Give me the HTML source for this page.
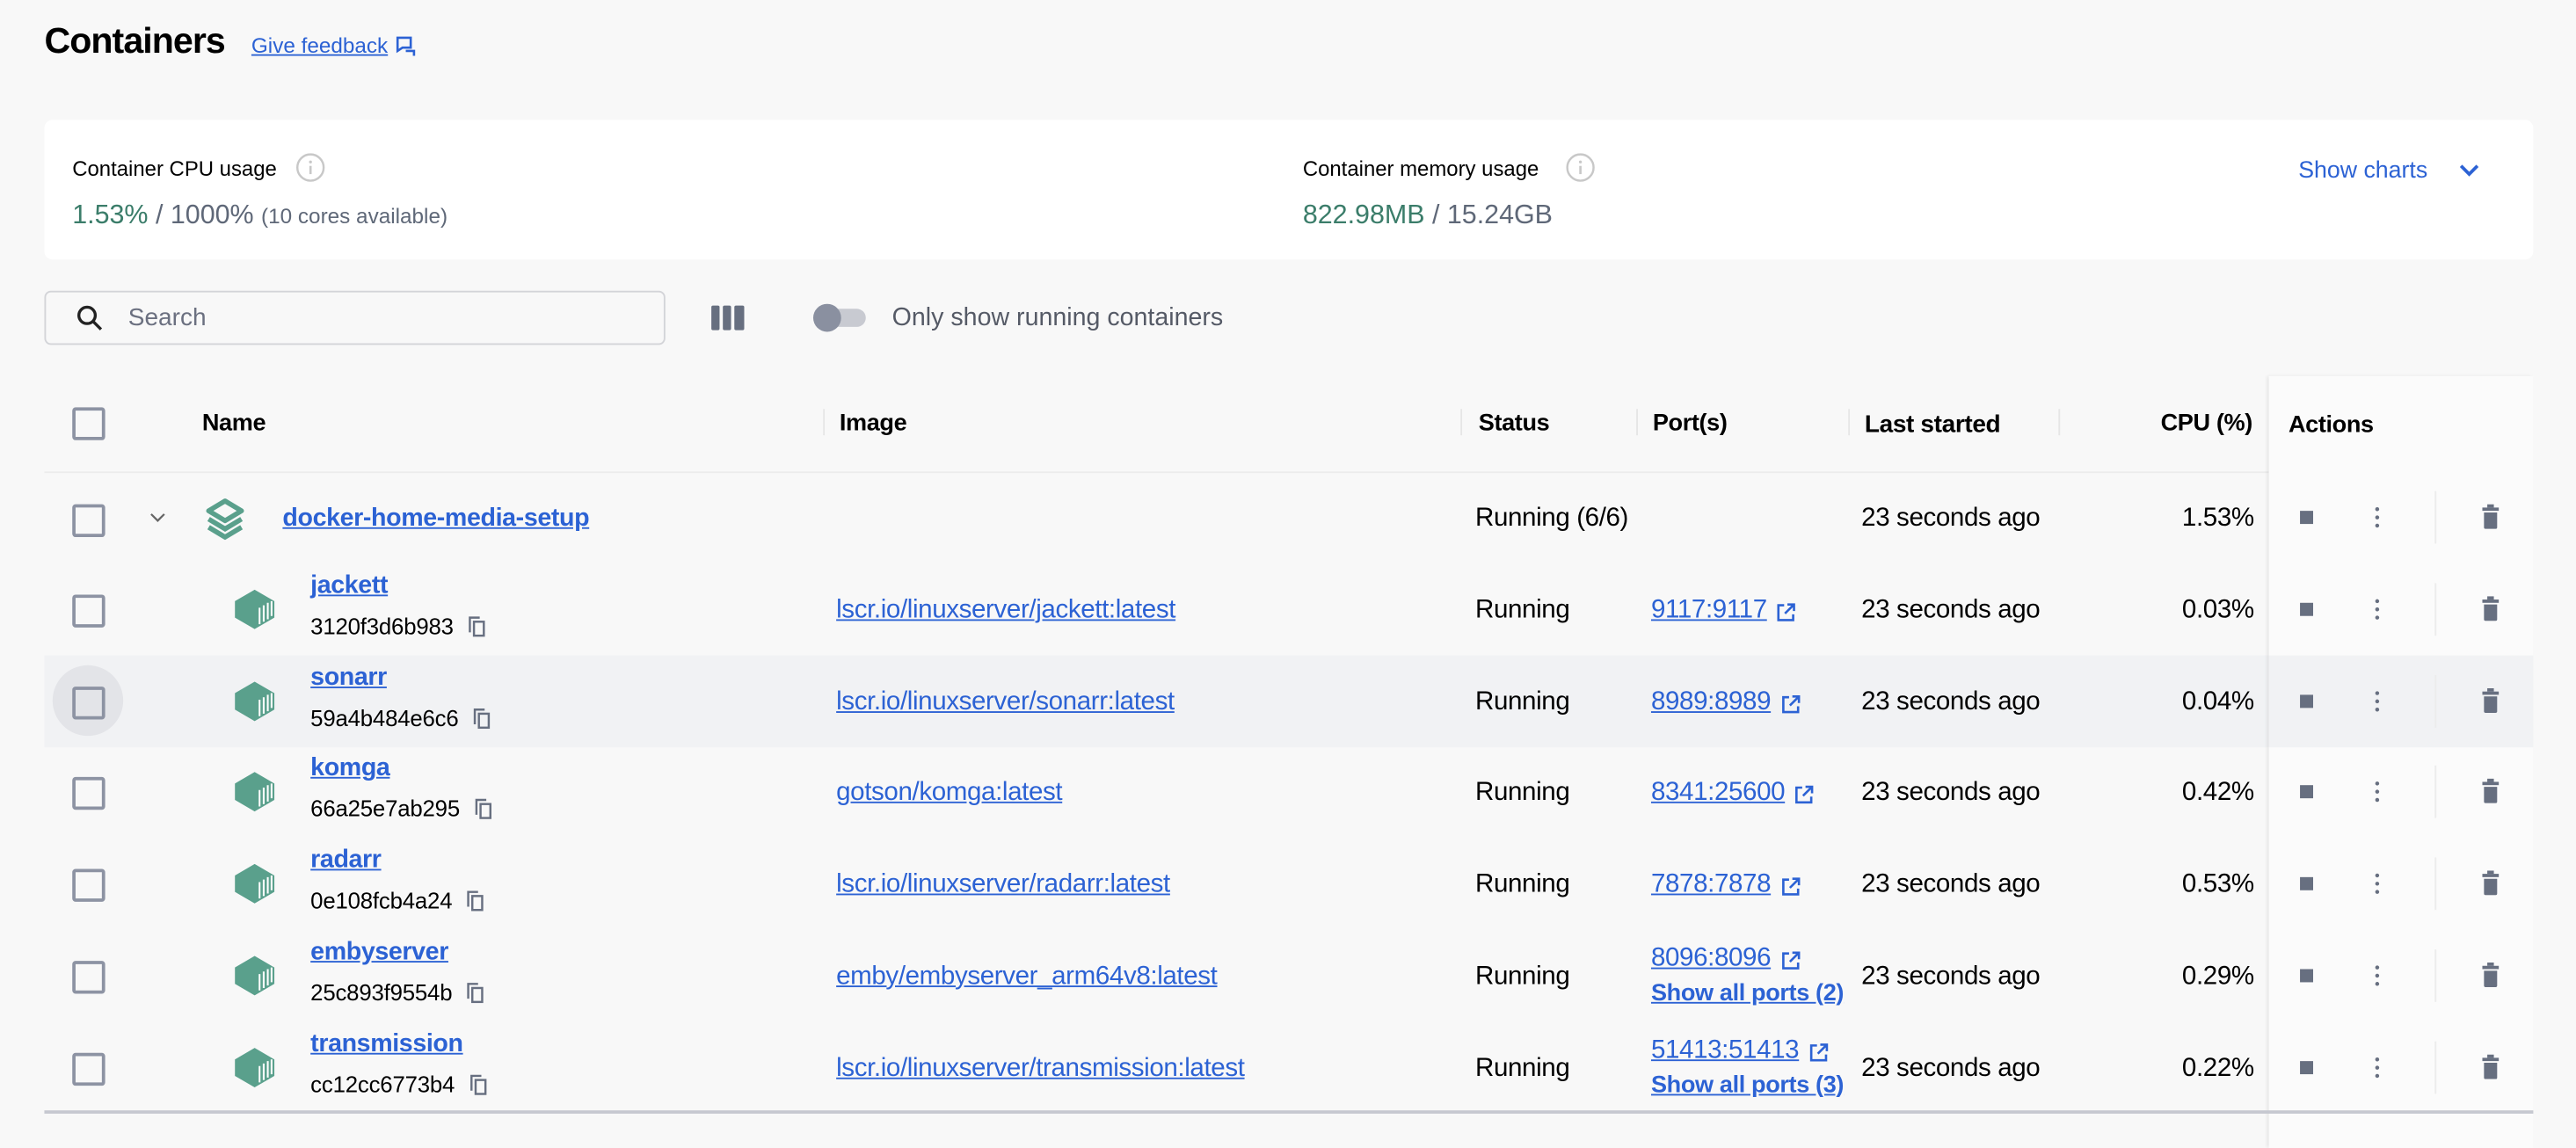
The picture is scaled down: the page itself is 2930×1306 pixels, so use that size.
<!DOCTYPE html>
<html><head><meta charset="utf-8"><style>
html,body{margin:0;padding:0;background:#f8f8f8;overflow:hidden}
#w{position:absolute;left:0;top:0;width:1568px;height:698px;transform:scale(1.86862);transform-origin:0 0;font-family:"Liberation Sans",sans-serif;color:#000;background:#f8f8f8}
.a{position:absolute;white-space:nowrap}
.lnk{color:#2c62d4;text-decoration:underline}
.b{font-weight:bold}
.cb{position:absolute;left:44px;width:16px;height:16px;border:2px solid #8d93a3;border-radius:2px}
.hdr{font-size:14.5px;font-weight:bold;letter-spacing:-0.2px}
.sep{position:absolute;width:1px;height:16px;background:#e6e6e6}
.t{font-size:15.8px;letter-spacing:-0.2px}
.hash{font-size:13.8px;letter-spacing:-0.1px}
</style></head><body><div id="w">
<div class="a" style="left:27px;top:12px;font-size:22px;font-weight:bold;letter-spacing:-0.5px">Containers</div>
<div class="a lnk" style="left:153px;top:20px;font-size:13px">Give feedback</div>
<svg class="a" style="left:241px;top:22px" width="13" height="13" viewBox="0 0 13 13"><path d="M1 1h8v6H4l-3 2z" fill="none" stroke="#2c62d4" stroke-width="1.4"/><path d="M6 9h5v3" fill="none" stroke="#2c62d4" stroke-width="1.4"/></svg>

<div class="a" style="left:27px;top:73px;width:1515px;height:85px;background:#fff;border-radius:5px"></div>
<div class="a" style="left:44px;top:95px;font-size:12.8px">Container CPU usage</div>
<svg class="a" style="left:180px;top:93px" width="18" height="18"><circle cx="9" cy="9" r="8" fill="none" stroke="#c8c8c8" stroke-width="1.3"/><rect x="8.3" y="8" width="1.4" height="5" fill="#c8c8c8"/><circle cx="9" cy="5.6" r="0.9" fill="#c8c8c8"/></svg>
<div class="a" style="left:44px;top:122px;font-size:16.3px;color:#5f6878"><span style="color:#3b7d6a">1.53%</span> / 1000% <span style="font-size:13px">(10 cores available)</span></div>
<div class="a" style="left:793px;top:95px;font-size:12.8px">Container memory usage</div>
<svg class="a" style="left:953px;top:93px" width="18" height="18"><circle cx="9" cy="9" r="8" fill="none" stroke="#c8c8c8" stroke-width="1.3"/><rect x="8.3" y="8" width="1.4" height="5" fill="#c8c8c8"/><circle cx="9" cy="5.6" r="0.9" fill="#c8c8c8"/></svg>
<div class="a" style="left:793px;top:122px;font-size:16.3px;color:#5f6878"><span style="color:#3b7d6a">822.98MB</span> / 15.24GB</div>
<div class="a" style="left:1399px;top:96px;font-size:14.3px;color:#2c62d4">Show charts</div>
<svg class="a" style="left:1496px;top:98px" width="14" height="12"><path d="M2 3l5 5 5-5" fill="none" stroke="#2c62d4" stroke-width="2"/></svg>

<div class="a" style="left:27px;top:177px;width:376px;height:31px;border:1.5px solid #d3d4d8;border-radius:4px;background:#f8f8f8"></div>
<svg class="a" style="left:46px;top:185px" width="18" height="18"><circle cx="7" cy="7" r="5" fill="none" stroke="#222" stroke-width="1.8"/><path d="M10.5 10.5l5 5" stroke="#222" stroke-width="1.8"/></svg>
<div class="a" style="left:78px;top:185px;font-size:15px;color:#6b7080">Search</div>
<div class="a" style="left:433px;top:186px;width:5px;height:15px;background:#676f80;border-radius:1px"></div>
<div class="a" style="left:440px;top:186px;width:5px;height:15px;background:#676f80;border-radius:1px"></div>
<div class="a" style="left:447px;top:186px;width:6px;height:15px;background:#676f80;border-radius:1px"></div>
<div class="a" style="left:498px;top:188px;width:29px;height:11px;background:#c8cad1;border-radius:6px"></div>
<div class="a" style="left:495px;top:185px;width:17px;height:17px;background:#8a90a0;border-radius:50%"></div>
<div class="a" style="left:543px;top:185px;font-size:15.3px;color:#555a66">Only show running containers</div>

<div class="a" style="left:27px;top:287px;width:1515px;height:1px;background:#ececec"></div>
<div class="a" style="left:27px;top:399px;width:1354px;height:56px;background:#f1f2f4"></div>
<div class="a" style="left:1381px;top:229px;width:161px;height:470px;background:#fbfbfb;box-shadow:-1px 0 2px rgba(0,0,0,0.08)"></div>
<div class="a" style="left:1381px;top:399px;width:161px;height:56px;background:#f1f2f4"></div>
<div class="a" style="left:27px;top:676px;width:1515px;height:1.5px;background:#c6c8d0"></div>

<div class="cb" style="top:248px"></div>
<div class="a hdr" style="left:123px;top:250px">Name</div>
<div class="sep" style="left:501px;top:249px"></div><div class="a hdr" style="left:511px;top:250px">Image</div>
<div class="sep" style="left:889px;top:249px"></div><div class="a hdr" style="left:900px;top:250px">Status</div>
<div class="sep" style="left:996px;top:249px"></div><div class="a hdr" style="left:1006px;top:250px">Port(s)</div>
<div class="sep" style="left:1125px;top:249px"></div><div class="a hdr" style="left:1135px;top:250px;font-size:15px">Last started</div>
<div class="sep" style="left:1253px;top:249px"></div><div class="a hdr" style="left:1280px;top:250px;width:91px;text-align:right">CPU (%)</div>
<div class="a hdr" style="left:1393px;top:251px">Actions</div>

<div class="cb" style="top:307px"></div>
<svg class="a" style="left:91px;top:311px" width="10" height="8"><path d="M1 2l4 4 4-4" fill="none" stroke="#666" stroke-width="1.2"/></svg>
<svg class="a" style="left:123px;top:303px" width="28" height="26" viewBox="0 0 28 26"><path d="M14 2l10 6-10 6-10-6z" fill="none" stroke="#5aa08c" stroke-width="3" stroke-linejoin="round"/><path d="M4 13l10 6 10-6" fill="none" stroke="#5aa08c" stroke-width="3"/><path d="M4 18l10 6 10-6" fill="none" stroke="#5aa08c" stroke-width="3"/></svg>
<div class="a lnk b" style="left:172px;top:307px;font-size:15.3px;letter-spacing:-0.2px">docker-home-media-setup</div>
<div class="a t" style="left:898px;top:307px">Running (6/6)</div>
<div class="a t" style="left:1133px;top:307px">23 seconds ago</div>
<div class="a t" style="left:1280px;top:307px;width:92px;text-align:right">1.53%</div>

<div id="rows"></div>
<script>
var rows=[
["jackett","3120f3d6b983","lscr.io/linuxserver/jackett:latest","9117:9117","0.03%",""],
["sonarr","59a4b484e6c6","lscr.io/linuxserver/sonarr:latest","8989:8989","0.04%",""],
["komga","66a25e7ab295","gotson/komga:latest","8341:25600","0.42%",""],
["radarr","0e108fcb4a24","lscr.io/linuxserver/radarr:latest","7878:7878","0.53%",""],
["embyserver","25c893f9554b","emby/embyserver_arm64v8:latest","8096:8096","0.29%","Show all ports (2)"],
["transmission","cc12cc6773b4","lscr.io/linuxserver/transmission:latest","51413:51413","0.22%","Show all ports (3)"]];
var h='';
function act(y){return '<div class="a" style="left:1400px;top:'+(y-4)+'px;width:8px;height:8px;background:#676f80"></div>'+
'<svg class="a" style="left:1444px;top:'+(y-7)+'px" width="6" height="14"><circle cx="3" cy="2" r="1.2" fill="#676f80"/><circle cx="3" cy="7" r="1.2" fill="#676f80"/><circle cx="3" cy="12" r="1.2" fill="#676f80"/></svg>'+
'<div class="a" style="left:1482px;top:'+(y-16)+'px;width:1px;height:32px;background:#ececec"></div>'+
'<svg class="a" style="left:1510px;top:'+(y-8)+'px" width="12" height="15"><rect x="1" y="2" width="10" height="2" fill="#676f80"/><rect x="4" y="0" width="4" height="2" fill="#676f80"/><path d="M2 5h8v9a1 1 0 0 1-1 1H3a1 1 0 0 1-1-1z" fill="#676f80"/></svg>';}
h+=act(315);
var ctx=document.createElement('canvas').getContext('2d');
function w(s,f){ctx.font=f;return ctx.measureText(s).width;}
rows.forEach(function(r,i){
 var top=343+i*55.7, y=top+28;
 if(i==1) h+='<div class="a" style="left:32px;top:'+(y-22)+'px;width:43px;height:43px;border-radius:50%;background:#e3e4e8"></div>';
 h+='<div class="cb" style="top:'+(y-9)+'px"></div>';
 h+='<svg class="a" style="left:141px;top:'+(y-13)+'px" width="28" height="26" viewBox="0 0 28 26"><path d="M14 1l12 7v10l-12 7-12-7V8z" fill="#5aa08c"/><path d="M17 12v10M19.5 10.5v10M22 9v10M24.3 8v9" stroke="#fff" stroke-width="1.1"/></svg>';
 h+='<div class="a lnk b" style="left:189px;top:'+(y-23)+'px;font-size:15.3px;letter-spacing:-0.2px">'+r[0]+'</div>';
 h+='<div class="a hash" style="left:189px;top:'+(y+3)+'px">'+r[1]+'</div>';
 var cx=189+w(r[1],'13.8px "Liberation Sans"')-1.2+9;
 h+='<svg class="a" style="left:'+cx+'px;top:'+(y+4)+'px" width="11" height="13"><rect x="3.5" y="3.5" width="6" height="8.5" fill="none" stroke="#676f80" stroke-width="1.3"/><path d="M1 10V1h6" fill="none" stroke="#676f80" stroke-width="1.3"/></svg>';
 h+='<div class="a lnk t" style="left:509px;top:'+(y-8)+'px">'+r[2]+'</div>';
 h+='<div class="a t" style="left:898px;top:'+(y-8)+'px">Running</div>';
 var py=r[5]?y-19:y-8;
 h+='<div class="a lnk t" style="left:1005px;top:'+py+'px">'+r[3]+'</div>';
 var ix=1005+w(r[3],'15.8px "Liberation Sans"')-2+6;
 h+='<svg class="a" style="left:'+ix+'px;top:'+(py+4)+'px" width="12" height="12"><path d="M5 1.5H1.5v9h9V7" fill="none" stroke="#2c62d4" stroke-width="1.4"/><path d="M7 1h4v4M11 1L5.5 6.5" fill="none" stroke="#2c62d4" stroke-width="1.4"/></svg>';
 if(r[5]) h+='<div class="a lnk b" style="left:1005px;top:'+(y+3)+'px;font-size:14.5px;letter-spacing:-0.2px">'+r[5]+'</div>';
 h+='<div class="a t" style="left:1133px;top:'+(y-8)+'px">23 seconds ago</div>';
 h+='<div class="a t" style="left:1280px;top:'+(y-8)+'px;width:92px;text-align:right">'+r[4]+'</div>';
 h+=act(y);
});
document.getElementById('rows').outerHTML=h;
</script>
</div></body></html>
